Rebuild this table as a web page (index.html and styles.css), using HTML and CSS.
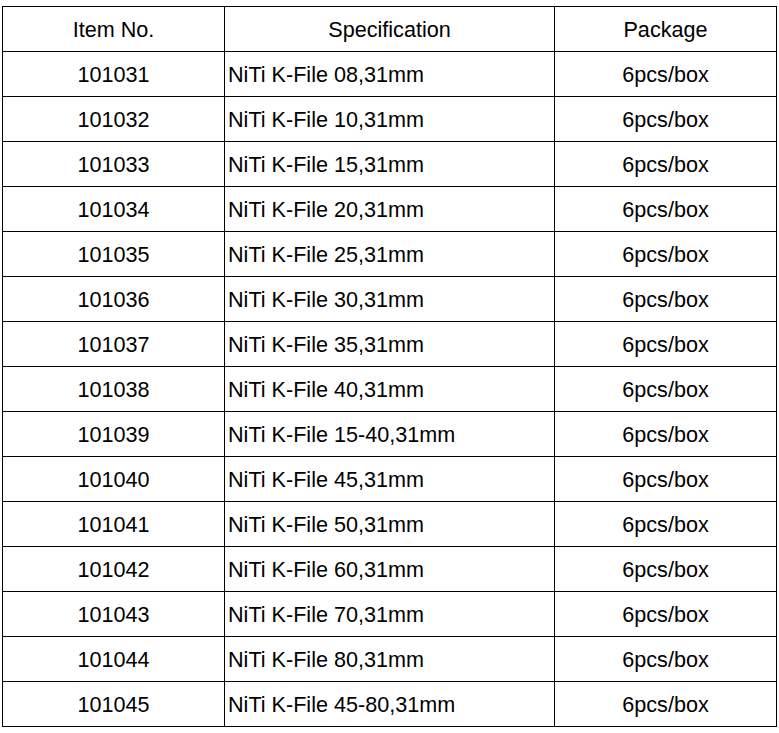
FILE: index.html
```html
<!DOCTYPE html>
<html>
<head>
<meta charset="utf-8">
<link rel="stylesheet" href="styles.css">
</head>
<body>
<div class="table">
  <div class="cell c">Item No.</div><div class="cell c">Specification</div><div class="cell c">Package</div>
  <div class="cell c">101031</div><div class="cell l">NiTi K-File 08,31mm</div><div class="cell c">6pcs/box</div>
  <div class="cell c">101032</div><div class="cell l">NiTi K-File 10,31mm</div><div class="cell c">6pcs/box</div>
  <div class="cell c">101033</div><div class="cell l">NiTi K-File 15,31mm</div><div class="cell c">6pcs/box</div>
  <div class="cell c">101034</div><div class="cell l">NiTi K-File 20,31mm</div><div class="cell c">6pcs/box</div>
  <div class="cell c">101035</div><div class="cell l">NiTi K-File 25,31mm</div><div class="cell c">6pcs/box</div>
  <div class="cell c">101036</div><div class="cell l">NiTi K-File 30,31mm</div><div class="cell c">6pcs/box</div>
  <div class="cell c">101037</div><div class="cell l">NiTi K-File 35,31mm</div><div class="cell c">6pcs/box</div>
  <div class="cell c">101038</div><div class="cell l">NiTi K-File 40,31mm</div><div class="cell c">6pcs/box</div>
  <div class="cell c">101039</div><div class="cell l">NiTi K-File 15-40,31mm</div><div class="cell c">6pcs/box</div>
  <div class="cell c">101040</div><div class="cell l">NiTi K-File 45,31mm</div><div class="cell c">6pcs/box</div>
  <div class="cell c">101041</div><div class="cell l">NiTi K-File 50,31mm</div><div class="cell c">6pcs/box</div>
  <div class="cell c">101042</div><div class="cell l">NiTi K-File 60,31mm</div><div class="cell c">6pcs/box</div>
  <div class="cell c">101043</div><div class="cell l">NiTi K-File 70,31mm</div><div class="cell c">6pcs/box</div>
  <div class="cell c">101044</div><div class="cell l">NiTi K-File 80,31mm</div><div class="cell c">6pcs/box</div>
  <div class="cell c">101045</div><div class="cell l">NiTi K-File 45-80,31mm</div><div class="cell c">6pcs/box</div>
</div>
</body>
</html>
```
FILE: styles.css
```css
html, body {
  margin: 0;
  padding: 0;
  background: #fff;
}
body {
  padding: 6px 0 0 2px;
  font-family: "Liberation Sans", Arial, sans-serif;
  font-size: 21.6px;
  color: #000;
}
.table {
  display: grid;
  grid-template-columns: 221px 329px 221px;
  grid-auto-rows: 44px;
  gap: 1px;
  padding: 1px;
  background: #000;
  width: max-content;
}
.cell {
  background: #fff;
  display: flex;
  align-items: center;
  white-space: nowrap;
  padding-top: 2px;
  box-sizing: border-box;
}
.c {
  justify-content: center;
}
.l {
  justify-content: flex-start;
  padding-left: 3px;
}
```
